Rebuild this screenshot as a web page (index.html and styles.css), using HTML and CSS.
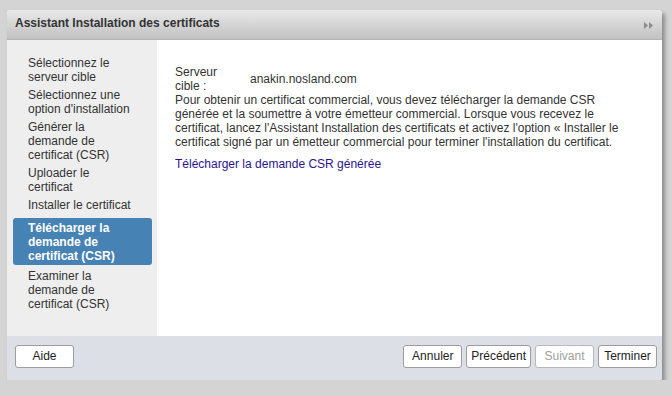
FILE: index.html
```html
<!DOCTYPE html>
<html>
<head>
<meta charset="utf-8">
<link rel="stylesheet" href="styles.css">
</head>
<body>
<div class="dialog">
  <div class="titlebar">
    <span class="title">Assistant Installation des certificats</span>
    <svg class="collapse" width="9" height="7" viewBox="0 0 9 7"><path d="M0 0L4 3.5L0 7Z M5 0L9 3.5L5 7Z" fill="#8a8a8a"/></svg>
  </div>
  <div class="body">
    <ul class="steps">
      <li>Sélectionnez le serveur cible</li>
      <li>Sélectionnez une option d'installation</li>
      <li>Générer la demande de certificat (CSR)</li>
      <li>Uploader le certificat</li>
      <li>Installer le certificat</li>
      <li class="active">Télécharger la demande de certificat (CSR)</li>
      <li>Examiner la demande de certificat (CSR)</li>
    </ul>
    <div class="content">
      <div class="field">
        <div class="label">Serveur cible :</div>
        <div class="value">anakin.nosland.com</div>
      </div>
      <p class="desc">Pour obtenir un certificat commercial, vous devez télécharger la demande CSR générée et la soumettre à votre émetteur commercial. Lorsque vous recevez le certificat, lancez l'Assistant Installation des certificats et activez l'option « Installer le certificat signé par un émetteur commercial pour terminer l'installation du certificat.</p>
      <a class="link" href="#">Télécharger la demande CSR générée</a>
    </div>
  </div>
  <div class="footer">
    <button class="btn">Aide</button>
    <div class="right">
      <button class="btn">Annuler</button>
      <button class="btn">Précédent</button>
      <button class="btn disabled">Suivant</button>
      <button class="btn">Terminer</button>
    </div>
  </div>
</div>
</body>
</html>
```
FILE: styles.css
```css
html, body {
  margin: 0;
  padding: 0;
  background: #d4d4d4;
  font-family: "Liberation Sans", Arial, sans-serif;
  font-size: 12px;
  color: #333;
}
body {
  padding: 10px 0 0 7px;
}
.dialog {
  width: 655px;
  height: 370px;
  display: flex;
  flex-direction: column;
  border-radius: 4px 4px 2px 2px;
  box-shadow: 3px 3px 4px rgba(0,0,0,0.35);
  overflow: hidden;
  background: #fff;
}
.titlebar {
  height: 30px;
  flex: none;
  display: flex;
  align-items: center;
  justify-content: space-between;
  padding: 0 9px 0 8px;
  background: linear-gradient(#e9e9e9, #c1c1c1);
  border-bottom: 1px solid #b5b5b5;
  box-sizing: border-box;
}
.title {
  font-weight: bold;
  font-size: 12px;
  color: #333;
  padding-bottom: 3px;
}
.collapse {
  margin-top: 2px;
}
.body {
  flex: 1;
  display: flex;
  min-height: 0;
}
.steps {
  width: 150px;
  flex: none;
  background: #eeeeee;
  margin: 0;
  padding: 14px 5px 0 6px;
  box-sizing: border-box;
  list-style: none;
}
.steps li {
  line-height: 14px;
  padding: 2px 18px 2px 15px;
  border-radius: 3px;
}
.steps li.active {
  background: #4682b4;
  color: #fff;
  font-weight: bold;
  padding: 3px 18px 2px 15px;
  margin: 4px 0 2px;
}
.content {
  flex: 1;
  padding: 25px 38px 0 18px;
}
.field {
  display: flex;
  align-items: center;
}
.label {
  width: 60px;
  line-height: 14px;
  margin-right: 15px;
}
.value {
  line-height: 14px;
}
.desc {
  margin: 0;
  line-height: 14px;
}
.link {
  display: inline-block;
  margin-top: 8px;
  color: #2a1490;
  text-decoration: none;
  line-height: 14px;
}
.footer {
  height: 40px;
  flex: none;
  background: #dcdfe5;
  display: flex;
  align-items: center;
  justify-content: space-between;
  padding: 0 5px 4px 8px;
}
.right {
  display: flex;
  gap: 4px;
}
.btn {
  height: 23px;
  min-width: 59px;
  padding: 0 4px;
  background: #fff;
  border: 1px solid #9c9c9c;
  border-radius: 3px;
  font-family: "Liberation Sans", Arial, sans-serif;
  font-size: 12px;
  color: #222;
}
.btn.disabled {
  color: #a0a0a0;
  border-color: #b8b8b8;
}
```
